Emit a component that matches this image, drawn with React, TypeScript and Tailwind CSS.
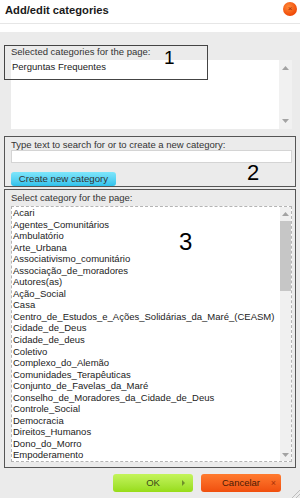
const CATEGORIES = [
  'Acari',
  'Agentes_Comunitários',
  'Ambulatório',
  'Arte_Urbana',
  'Associativismo_comunitário',
  'Associação_de_moradores',
  'Autores(as)',
  'Ação_Social',
  'Casa',
  'Centro_de_Estudos_e_Ações_Solidárias_da_Maré_(CEASM)',
  'Cidade_de_Deus',
  'Cidade_de_deus',
  'Coletivo',
  'Complexo_do_Alemão',
  'Comunidades_Terapêuticas',
  'Conjunto_de_Favelas_da_Maré',
  'Conselho_de_Moradores_da_Cidade_de_Deus',
  'Controle_Social',
  'Democracia',
  'Direitos_Humanos',
  'Dono_do_Morro',
  'Empoderamento',
]

function Arrow({ dir }: { dir: 'up' | 'down' }) {
  return (
    <svg width="7" height="4" viewBox="0 0 7 4" aria-hidden="true">
      <path d={dir === 'up' ? 'M0 4 L3.5 0 L7 4 Z' : 'M0 0 L3.5 4 L7 0 Z'} fill="#a3a3a3" />
    </svg>
  )
}

export default function App() {
  return (
    <div className="relative flex h-[498px] w-[300px] flex-col overflow-hidden bg-white font-['Liberation_Sans',Arial,sans-serif] text-[#222]">
      {/* title bar */}
      <div className="flex h-[24px] items-start justify-between border-b border-[#e6e6e6] pl-[5px] pr-[3px] pt-[3px]">
        <span className="text-[11.2px] font-bold leading-[14px] text-[#1a1a1a]">Add/edit categories</span>
        <span className="mt-[-1px] flex h-[14px] w-[14px] items-center justify-center rounded-full bg-[radial-gradient(circle_at_40%_35%,#ff8a3a,#f04a08_70%,#e03a00)] text-[8px] leading-none text-[#a02a00]">
          ×
        </span>
      </div>
      <div className="h-[8px] bg-white" />

      {/* body */}
      <div className="flex flex-1 flex-col bg-[#ebebeb] px-[4px]">
        {/* selected */}
        <div className="mt-[13px] border border-transparent pl-[6px] pr-[3px]">
          <div className="text-[9.5px] leading-[12px] text-[#333]">Selected categories for the page:</div>
          <div className="mt-[2px] flex h-[69px] bg-white">
            <div className="flex-1 pl-[1px] pt-[1px] text-[9.5px] leading-[11px] text-[#222]">Perguntas Frequentes</div>
            <div className="flex w-[13px] flex-col items-center justify-between bg-[#f1f1f1] pb-[6px] pt-[6px]">
              <Arrow dir="up" />
              <Arrow dir="down" />
            </div>
          </div>
        </div>

        {/* search / create */}
        <div className="relative mt-[6px] border border-[#555] pl-[6px] pr-[3px] pt-[3px]">
          <div className="text-[9.5px] leading-[10px] text-[#333]">Type text to search for or to create a new category:</div>
          <div className="h-[13px] border border-[#d4d4d4] bg-white" />
          <div className="mt-[9px] flex h-[14px] w-[105px] items-center justify-center rounded-[3px] bg-gradient-to-b from-[#7ee6fb] to-[#2ec2ec] text-[9.7px] text-[#333]">
            Create new category
          </div>
          <span className="absolute left-[242px] top-[25px] text-[22px] leading-none text-black">2</span>
        </div>

        {/* category list */}
        <div className="relative mt-[2px] border border-[#555] pb-[5px] pl-[6px] pr-[3px] pt-[3px]">
          <div className="text-[9.5px] leading-[10px] text-[#333]">Select category for the page:</div>
          <div className="mt-[3px] flex h-[256px] border border-dashed border-[#b4b4b4] bg-white">
            <ul className="flex-1 overflow-hidden whitespace-nowrap pl-[1px] text-[9.5px] leading-[11.55px] text-[#222]">
              {CATEGORIES.map((c) => (
                <li key={c}>{c}</li>
              ))}
            </ul>
            <div className="flex w-[11px] flex-col items-center bg-[#f0f0f0] pb-[4px] pt-[5px]">
              <Arrow dir="up" />
              <div className="mt-[5px] h-[70px] w-[11px] bg-[#c6c6c6]" />
              <div className="flex-1" />
              <Arrow dir="down" />
            </div>
          </div>
          <span className="absolute left-[174px] top-[40px] text-[24px] leading-none text-black">3</span>
        </div>

        {/* actions */}
        <div className="mt-[6px] flex justify-end gap-[8px] pr-[15px]">
          <button className="relative flex h-[18px] w-[80px] items-center justify-center rounded-[3px] bg-gradient-to-b from-[#c4f45a] to-[#97dc14] text-[9.5px] text-[#3b4a1a]">
            OK
            <svg className="absolute right-[8px] top-[6px]" width="3" height="6" viewBox="0 0 3 6" aria-hidden="true">
              <path d="M0 0 L3 3 L0 6 Z" fill="#6f8f2a" />
            </svg>
          </button>
          <button className="relative flex h-[18px] w-[80px] items-center justify-center rounded-[3px] bg-gradient-to-b from-[#ff7a2e] to-[#f04e0c] text-[9.5px] text-[#4a1a05]">
            Cancelar
            <span className="absolute right-[5px] top-[3px] text-[9px] leading-[12px] text-[#a83008]">×</span>
          </button>
        </div>
      </div>

      {/* annotation box 1 */}
      <div className="pointer-events-none absolute left-[4px] top-[45px] h-[35px] w-[204px] border border-[#444]">
        <span className="absolute left-[159px] top-[2px] text-[19px] leading-none text-black">1</span>
      </div>

      {/* resize grip */}
      <svg className="absolute bottom-0 right-0" width="9" height="9" viewBox="0 0 9 9" aria-hidden="true">
        <path d="M9 1 L1 9 M9 5 L5 9" stroke="#bcbcbc" strokeWidth="1" />
      </svg>
    </div>
  )
}
